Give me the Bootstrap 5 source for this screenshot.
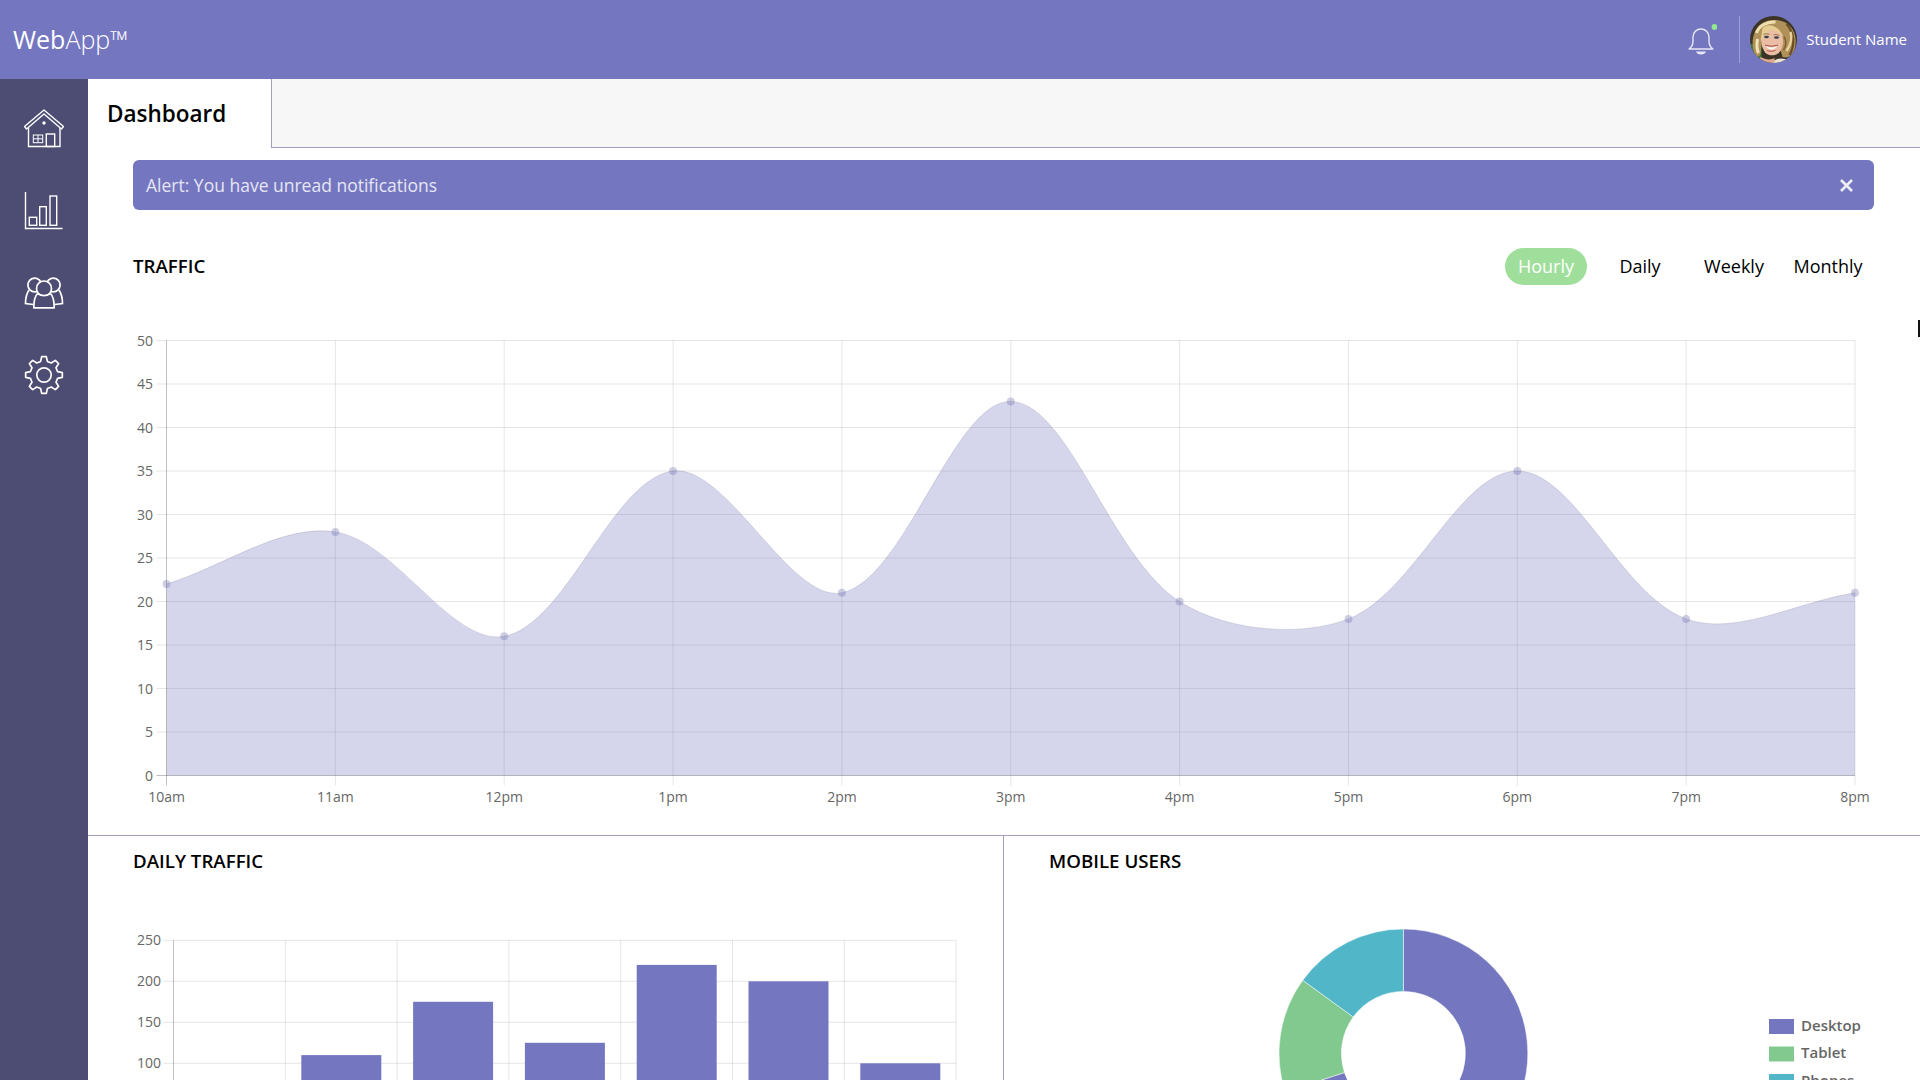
<!doctype html>
<html lang="en">
<head>
<meta charset="utf-8">
<title>WebApp Dashboard</title>
<link href="https://cdn.jsdelivr.net/npm/bootstrap@5.3.0/dist/css/bootstrap.min.css" rel="stylesheet">
<style>
html,body{height:100%}
body{font-family:"Open Sans",sans-serif;color:#000;background:#fff;overflow:hidden}
.app-top{height:79px;background:#7477bf;color:#fff;padding:0 13px;flex:none}
.app-brand{font-size:25px;line-height:1;margin:0;color:#fff}
.app-brand b{font-weight:400}
.app-brand span{font-weight:300}
.top-right{height:47px}
.top-div{width:1px;height:47px;background:rgba(255,255,255,.3);margin:0 10px 0 22px}
.top-name{font-size:15px;margin-left:9px;color:#fff;white-space:nowrap}
.avatar-svg{width:47px;height:47px;display:block}
.app-side{width:88px;background:#4d4c72;flex:none;padding-top:30px}
.side-link{height:82px;display:block;text-align:center}
.side-link svg{display:block;margin:0 auto;width:40px;height:40px;fill:none;stroke:#fff;stroke-width:1.4}
.app-main{min-width:0}
.tab-row{height:69px}
.tab-cur{width:184px;padding-left:19px;border-right:1px solid #a29fc0;flex:none}
.tab-cur h1{font-size:22.5px;font-weight:600;margin:0;line-height:1;padding-top:24px}
.tab-rest{background:#f7f7f7;border-bottom:1px solid #a29fc0}
.note-bar{margin:12px 46px 0 45px;height:50px;background:#7477bf;color:#e6e6f4;border:0;border-radius:6px;padding:0 20px 0 13px;font-size:17.5px}
.note-close{background:none;border:0;padding:0;line-height:0}
.note-close svg{width:15px;height:15px;stroke:#eeeef8;stroke-width:2.6;fill:none;display:block}
.sec-head{padding:38px 51px 0 45px;height:75px}
.sec-title{font-size:18.7px;font-weight:600;margin:0;line-height:1}
.range-pills{gap:12px}
.range-pills .nav-link{width:82px;height:37px;padding:0;line-height:37px;text-align:center;font-size:18px;color:#000;border-radius:19px}
.range-pills .nav-link.active{background:#9fdf9b;color:#fff}
.chart-svg{display:block}
.chart-svg text{font-family:"Open Sans",sans-serif;font-size:14px;fill:#666;dominant-baseline:central}
.chart-svg text.legend-t{font-weight:600;font-size:15px}
.grid-l{stroke:rgba(0,0,0,.1);stroke-width:1}
.axis-l{stroke:rgba(0,0,0,.25);stroke-width:1}
.split-row{border-top:1px solid #a29fc0}
.split-cell{height:245px;overflow:hidden}
.split-a{width:916px;border-right:1px solid #a29fc0;padding:16px 0 0 45px;flex:none}
.split-b{padding:16px 0 0 45px}
.split-cell .sec-title{height:29px;line-height:18px}
.cursor-tick{position:fixed;right:0;top:320px;width:2px;height:17px;background:#111}
</style>
</head>
<body class="d-flex flex-column">
<header class="app-top d-flex align-items-center justify-content-between">
  <p class="app-brand"><b>Web</b><span>App™</span></p>
  <div class="top-right d-flex align-items-center">
    <svg width="30" height="32" viewBox="1688 24 30 32" fill="none" aria-hidden="true">
      <path d="M1690 49C1692.500 47.500 1694 45 1694 41V37C1694 32 1698 29 1702 29C1706 29 1710 32 1710 37V41C1710 45 1711.500 47.500 1714 49Z" stroke="#e6e6f4" stroke-width="1.400" stroke-linejoin="round"/>
      <path d="M1697 51.500H1707C1706 55.500 1698 55.500 1697 51.500Z" fill="#e6e6f4"/>
      <circle cx="1715.500" cy="27" r="2.900" fill="#90e890"/>
    </svg>
    <span class="top-div"></span>
    <svg class="avatar-svg" viewBox="4.500 4 47 47" aria-hidden="true">
      <defs>
        <clipPath id="avc"><circle cx="28" cy="27.500" r="23.500"/></clipPath>
        <filter id="avb" x="-10%" y="-10%" width="120%" height="120%"><feGaussianBlur stdDeviation=".55"/></filter>
      </defs>
      <g clip-path="url(#avc)">
        <rect x="0" y="0" width="60" height="60" fill="#3b3426"/>
        <g filter="url(#avb)">
          <rect x="3" y="32" width="13" height="20" fill="#3f7a3c"/>
          <path d="M9 42C4 28 9 9 27 8C43 7 52 19 50 33C49 42 44 47 37 45L30 20 17 24 15 42C13 46 11 46 9 42Z" fill="#b0915a"/>
          <path d="M41 12C49 21 50 33 44 43" stroke="#6a4c24" stroke-width="2.200" fill="none"/>
          <path d="M11 21C13 14 21 9.500 30 10" stroke="#efe0b0" stroke-width="3" fill="none"/>
          <path d="M45 20C47 26 45 33 41 39" stroke="#e8d39c" stroke-width="2.500" fill="none"/>
          <path d="M12 27C11 33 11 37 13 41" stroke="#f0e2b8" stroke-width="3" fill="none"/>
          <path d="M38 24C41 28 41 34 38 38" stroke="#7f5f30" stroke-width="1.500" fill="none"/>
          <path d="M16 25C17 16 24 13 31 16C38 20 39 30 36 37C33 44 25 45 20 41C17 37 15 32 16 25Z" fill="#eabda4"/>
          <path d="M26 51C30 46 37 45 44 49V56H26Z" fill="#ece2d8"/>
          <path d="M15 45C20 48 26 48 29 46V56H12Z" fill="#dca98e"/>
          <path d="M17 16C24 10 33 14 39 26C35 21 30 18 25 18C22 22 18 25 15 29Z" fill="#e4cc92"/>
          <path d="M18 22.500C20 21.500 22 21.500 24 22.500M28 23C30 22 32.500 22.500 34 24" stroke="#7d5f45" stroke-width=".8" fill="none"/>
          <ellipse cx="21" cy="25" rx="2.400" ry="1.200" fill="#38434c"/>
          <ellipse cx="31" cy="25.500" rx="2.500" ry="1.200" fill="#38434c"/>
          <path d="M20 33.500C23 36 29 36 32 33.500C30 39 22 39 20 33.500Z" fill="#fbf7f2"/>
          <path d="M19.500 33C23 34.500 29 34.500 32.500 33" stroke="#a03f38" stroke-width=".9" fill="none"/>
          <path d="M21.500 38.500C23.500 39.500 27.500 39.500 30 38.500" stroke="#a54f42" stroke-width=".9" fill="none"/>
        </g>
      </g>
    </svg>
    <span class="top-name">Student Name</span>
  </div>
</header>
<div class="d-flex flex-grow-1" style="min-height:0">
  <aside class="app-side">
    <a class="side-link" href="#" aria-label="Home"><svg viewBox="0 0 40 40"><path d="M.5 17.500 20 1 39.500 17.500 37.500 20 20 5 2.500 20Z" stroke-linejoin="round"/><path d="M4.500 19V37.500H36V19"/><rect x="9.300" y="26" width="9.400" height="7.700" stroke-width="1"/><path d="M14 26V33.700M9.300 29.800H18.700" stroke-width="1"/><rect x="22.300" y="25" width="8.400" height="12.500"/><circle cx="20" cy="14" r="1.700" fill="#fff" stroke="none"/></svg></a>
    <a class="side-link" href="#" aria-label="Reports"><svg viewBox="24 191 40 40"><path d="M25.500 192V228.500H62.500"/><rect x="29.300" y="217.300" width="7.400" height="8"/><rect x="39.700" y="206.700" width="6.600" height="18.600"/><rect x="50" y="196" width="6.700" height="29.300"/></svg></a>
    <a class="side-link" href="#" aria-label="Users"><svg viewBox="24 273 40 40"><g stroke-width="1.700"><circle cx="34.700" cy="285" r="6.800"/><circle cx="53.300" cy="285" r="6.800"/><path d="M29 290C27 293 25.500 298 25.500 303.500L33 304.500M59 290C61 293 62.500 298 62.500 303.500L55 304.500"/><circle cx="44" cy="288.500" r="7.500" fill="#4d4c72"/><path d="M37.500 293.500C35 296 33.800 301 33.800 307.800H54.200C54.200 301 53 296 50.500 293.500C46 296.500 42 296.500 37.500 293.500Z" fill="#4d4c72" stroke-linejoin="round"/></g></svg></a>
    <a class="side-link" href="#" aria-label="Settings"><svg viewBox="24 355 40 40"><path id="gearP" stroke-width="1.700" stroke-linejoin="round"/><circle cx="44" cy="375" r="7.200" stroke-width="1.700"/></svg></a>
  </aside>
  <main class="app-main flex-grow-1">
    <div class="tab-row d-flex">
      <div class="tab-cur"><h1>Dashboard</h1></div>
      <div class="tab-rest flex-grow-1"></div>
    </div>
    <div class="note-bar alert d-flex align-items-center justify-content-between mb-0" role="alert">
      <span>Alert: You have unread notifications</span>
      <button type="button" class="note-close" aria-label="Close"><svg viewBox="0 0 15 15"><path d="M2 2 13 13M13 2 2 13"/></svg></button>
    </div>
    <div class="sec-head d-flex align-items-center justify-content-between">
      <h2 class="sec-title">TRAFFIC</h2>
      <ul class="nav range-pills">
        <li class="nav-item"><a class="nav-link active" href="#">Hourly</a></li>
        <li class="nav-item"><a class="nav-link" href="#">Daily</a></li>
        <li class="nav-item"><a class="nav-link" href="#">Weekly</a></li>
        <li class="nav-item"><a class="nav-link" href="#">Monthly</a></li>
      </ul>
    </div>
    <svg id="lineC" class="chart-svg" width="1832" height="550" viewBox="88 285 1832 550"></svg>
    <div class="split-row d-flex">
      <section class="split-cell split-a">
        <h2 class="sec-title">DAILY TRAFFIC</h2>
        <svg id="barC" class="chart-svg" width="870" height="199" viewBox="133 881 870 199"></svg>
      </section>
      <section class="split-cell split-b flex-grow-1">
        <h2 class="sec-title">MOBILE USERS</h2>
        <svg id="donutC" class="chart-svg" width="871" height="199" viewBox="1049 881 871 199"></svg>
      </section>
    </div>
  </main>
</div>
<span class="cursor-tick"></span>
<script>
(function(){
  var NS='http://www.w3.org/2000/svg';
  function el(p,n,a,t){var e=document.createElementNS(NS,n);for(var k in a)e.setAttribute(k,a[k]);if(t!=null)e.textContent=t;p.appendChild(e);return e;}
  (function(){
    var d='',cx=44,cy=375,n=8,ro=18.5,ri=14;
    for(var i=0;i<n;i++){
      var a=(i/n)*2*Math.PI-Math.PI/2,w=Math.PI/n;
      var pts=[[ri,a-w*.62],[ro,a-w*.32],[ro,a+w*.32],[ri,a+w*.62]];
      pts.forEach(function(q,j){var x=cx+q[0]*Math.cos(q[1]),y=cy+q[0]*Math.sin(q[1]);d+=((i==0&&j==0)?'M':'L')+x.toFixed(2)+' '+y.toFixed(2);});
    }
    document.getElementById('gearP').setAttribute('d',d+'Z');
  })();
  var s=document.getElementById('lineC');
  var L=166.5,R=1855,T=340.5,B=775.5,vals=[22,28,16,35,21,43,20,18,35,18,21];
  var labs=['10am','11am','12pm','1pm','2pm','3pm','4pm','5pm','6pm','7pm','8pm'];
  var st=(R-L)/10;
  for(var v=0;v<=50;v+=5){var y=B-(B-T)*v/50;
    el(s,'line',{x1:L-10,x2:R,y1:y,y2:y,'class':v==0?'axis-l':'grid-l'});
    el(s,'text',{x:153,y:y-.5,'text-anchor':'end'},v);}
  labs.forEach(function(l,i){var x=L+st*i;
    el(s,'line',{x1:x,x2:x,y1:T,y2:B+10,'class':i==0?'axis-l':'grid-l'});
    el(s,'text',{x:x,y:796,'text-anchor':'middle'},l);});
  var P=vals.map(function(v,i){return [L+st*i,B-(B-T)*v/50];});
  var t=.34,cp=[];
  P.forEach(function(c,i){var a=P[Math.max(i-1,0)],b=P[Math.min(i+1,P.length-1)];
    var d1=Math.hypot(c[0]-a[0],c[1]-a[1]),d2=Math.hypot(b[0]-c[0],b[1]-c[1]),
        fa=d1+d2?t*d1/(d1+d2):0,fb=d1+d2?t*d2/(d1+d2):0;
    cp.push([[c[0]-fa*(b[0]-a[0]),c[1]-fa*(b[1]-a[1])],[c[0]+fb*(b[0]-a[0]),c[1]+fb*(b[1]-a[1])]]);});
  var d='M'+P[0].join(' ');
  for(var i=1;i<P.length;i++){d+='C'+cp[i-1][1].join(' ')+' '+cp[i][0].join(' ')+' '+P[i].join(' ');}
  el(s,'path',{d:d+'L'+R+' '+B+'L'+L+' '+B+'Z',fill:'rgba(116,119,191,.3)'});
  el(s,'path',{d:d,fill:'none',stroke:'rgba(90,90,120,.18)','stroke-width':1});
  P.forEach(function(p){el(s,'circle',{cx:p[0],cy:p[1],r:4,fill:'rgba(100,100,170,.3)'});});
  var b=document.getElementById('barC'),bL=173.5,bS=111.8,b0=1145.3,bT=940.3;
  for(var v=0;v<=250;v+=50){var y=b0-(b0-bT)*v/250;
    el(b,'line',{x1:bL-10,x2:bL+bS*7,y1:y,y2:y,'class':v==0?'axis-l':'grid-l'});
    el(b,'text',{x:161,y:y-.5,'text-anchor':'end'},v);}
  for(var i=0;i<=7;i++){var x=bL+bS*i;el(b,'line',{x1:x,x2:x,y1:bT,y2:b0+10,'class':i==0?'axis-l':'grid-l'});}
  [75,110,175,125,220,200,100].forEach(function(v,i){var h=(b0-bT)*v/250;
    el(b,'rect',{x:bL+bS*i+16,y:b0-h,width:80,height:h,fill:'#7477bf'});});
  var c=document.getElementById('donutC'),cx=1403.4,cy=1053.4,ro=124.4,ri=62;
  function seg(a0,a1,f){function p(r,a){a=a*Math.PI/180;return (cx+r*Math.sin(a)).toFixed(2)+' '+(cy-r*Math.cos(a)).toFixed(2);}
    var lg=(a1-a0)>180?1:0;
    el(c,'path',{d:'M'+p(ro,a0)+'A'+ro+' '+ro+' 0 '+lg+' 1 '+p(ro,a1)+'L'+p(ri,a1)+'A'+ri+' '+ri+' 0 '+lg+' 0 '+p(ri,a0)+'Z',fill:f,stroke:'#fff','stroke-width':.5});}
  seg(0,252,'#7477bf');seg(252,306,'#81c98f');seg(306,360,'#51b6c8');
  [['Desktop','#7477bf',1019],['Tablet','#81c98f',1046.5],['Phones','#51b6c8',1074]].forEach(function(r){
    el(c,'rect',{x:1769,y:r[2],width:25,height:15,fill:r[1]});
    el(c,'text',{x:1801,y:r[2]+5.5,'class':'legend-t'},r[0]);});
})();
</script>
<script src="https://cdn.jsdelivr.net/npm/bootstrap@5.3.0/dist/js/bootstrap.bundle.min.js"></script>
</body>
</html>
